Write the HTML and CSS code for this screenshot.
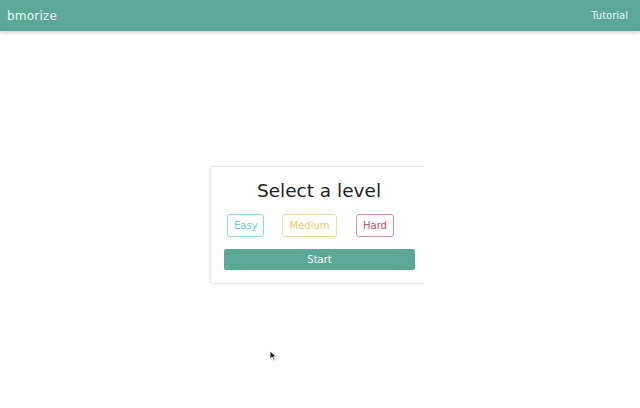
FILE: index.html
```html
<!DOCTYPE html>
<html>
<head>
<meta charset="utf-8">
<link rel="stylesheet" href="styles.css">
</head>
<body>
<header class="topbar">
  <span class="brand">bmorize</span>
  <span class="nav">Tutorial</span>
</header>
<main class="stage">
  <section class="card">
    <h1 class="title">Select a level</h1>
    <div class="levels">
      <button class="level easy">Easy</button>
      <button class="level medium">Medium</button>
      <button class="level hard">Hard</button>
    </div>
    <button class="start">Start</button>
  </section>
</main>
<svg class="cursor" width="10" height="12" viewBox="0 0 10 12"><path d="M1 1 L1 9 L3 7 L5 11 L6 10.5 L4.5 6.8 L7.5 6.8 Z" fill="#222" stroke="#fff" stroke-width="0.8"/></svg>
</body>
</html>
```
FILE: styles.css
```css
html, body { margin: 0; padding: 0; background: #fff; }
body { font-family: "DejaVu Sans", "Open Sans", sans-serif; width: 640px; height: 408px; overflow: hidden; position: relative; }
.topbar {
  height: 31px;
  background: #5ba896;
  box-shadow: 0 2px 3px rgba(0,0,0,0.18);
  display: flex;
  align-items: center;
  justify-content: space-between;
  padding: 0 12px 0 7px;
  color: #eef7f4;
}
.brand { font-size: 12px; letter-spacing: 0.2px; }
.nav { font-size: 10px; }
.stage { padding-top: 136px; display: flex; justify-content: flex-start; padding-left: 211px; }
.card {
  width: 218px;
  box-sizing: border-box;
  padding: 10px 13px 13px;
  border-radius: 3px;
  box-shadow: 0 0 3px rgba(0,0,0,0.28);
  clip-path: inset(-6px 5px -6px -6px);
  display: flex;
  flex-direction: column;
}
.title {
  margin: 0;
  text-align: center;
  font-weight: normal;
  font-size: 18.5px;
  line-height: 28px;
  color: #222;
  padding-right: 2px;
}
.levels { display: flex; gap: 18px; padding-left: 3px; margin-top: 9px; }
.level {
  font-family: inherit;
  font-size: 10px;
  height: 23px;
  padding: 0 6px;
  background: #fff;
  border-radius: 3px;
  border: 1px solid;
}
.easy { color: #6cc9d4; border-color: #8fd7df; width: 37px; }
.medium { color: #e4ca6a; border-color: #ecdca4; width: 55px; }
.hard { color: #bf4a6c; border-color: #d592a6; width: 38px; margin-left: 1px; }
.start {
  margin-top: 12px;
  width: 191px;
  height: 21px;
  background: #5ba896;
  border: none;
  border-radius: 2px;
  color: #fff;
  font-family: inherit;
  font-size: 10px;
}
.cursor { position: absolute; left: 269px; top: 350px; }
```
